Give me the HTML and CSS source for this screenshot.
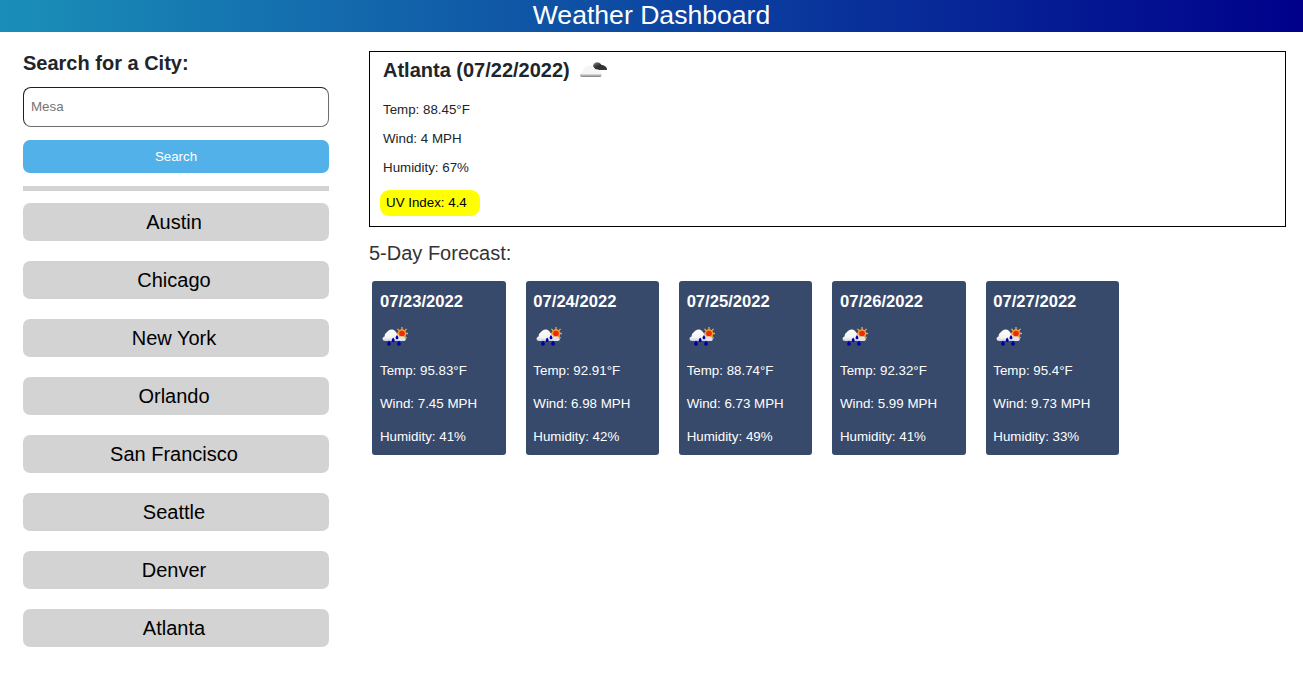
FILE: index.html
```html
<!DOCTYPE html>
<html lang="en">
<head>
    <meta charset="UTF-8">
    <meta name="viewport" content="width=device-width, initial-scale=1.0">
    <title>Weather Dashboard</title>
    <link rel="stylesheet" href="styles.css">
</head>
<body>
    <svg class="defs" width="0" height="0" aria-hidden="true">
        <defs>
            <linearGradient id="cloud-light" x1="0" y1="0" x2="0" y2="1">
                <stop offset="0" stop-color="#f4f4f4"/>
                <stop offset="0.7" stop-color="#f6f6f6"/>
                <stop offset="0.85" stop-color="#b5b5b5"/>
                <stop offset="1" stop-color="#808080"/>
            </linearGradient>
            <linearGradient id="cloud-dark" x1="0" y1="0" x2="1" y2="1">
                <stop offset="0" stop-color="#8a8a8a"/>
                <stop offset="0.45" stop-color="#2e2e2e"/>
                <stop offset="1" stop-color="#3c3c3c"/>
            </linearGradient>
            <linearGradient id="cloud-white" x1="0" y1="0" x2="0" y2="1">
                <stop offset="0" stop-color="#ffffff"/>
                <stop offset="0.7" stop-color="#f4f4f4"/>
                <stop offset="1" stop-color="#c9ced8"/>
            </linearGradient>
            <symbol id="icon-clouds" viewBox="0 0 30 18">
                <path d="M14 6c.4-2.400 2.600-4 5-3.600 1.800.2 3 1.300 3.600 2.600 2.400.2 4.400 1.400 5.400 3.400.4.900-.2 1.600-1.200 1.600H19c-2.500 0-4.600-1.600-5-4z" fill="url(#cloud-dark)"/>
                <path d="M1 15c0-1.700 1-3 2.800-3.400C4.200 8.400 7 5.800 10.500 5.800c2.800 0 5 1.500 6 3.600 2.800-.3 5.500 1.400 6 4 .3 1.700-.2 3.600-1.500 3.600H3c-1.300 0-2-1-2-2z" fill="url(#cloud-light)"/>
            </symbol>
            <symbol id="icon-rain-sun" viewBox="0 0 26 19">
                <path d="M20 0v13M13.500 6.500h13M15.400 1.900l9.200 9.200M24.600 1.900l-9.200 9.200" stroke="#f5a941" stroke-width="1.300"/>
                <circle cx="20" cy="6.500" r="4.300" fill="#f59a2c"/>
                <circle cx="20" cy="6.500" r="2.800" fill="#ee2a0c"/>
                <path d="M16 10c2.500-.6 6-.6 7 .4 1 .8 1 1.800.6 2.600-.3.600-.9 1-1.600 1H15z" fill="#dfe3ea"/>
                <path d="M3 14C1.300 14 .3 12.800 .6 11.300c.2-1 1-1.700 2-1.900 0-1.600.7-3 1.900-3.800C5.800 3.200 8.700 1.700 11.200 2.700c1.900.7 3.200 2.300 3.500 4.300 1.500.3 2.400 1.500 2.400 3.200 0 2.300-1.300 3.800-3 3.800z" fill="url(#cloud-white)"/>
                <path d="M7 13.400c1 1.500 1.900 2.400 1.900 3.400a1.900 1.900 0 0 1-3.800 0c0-1 .9-1.900 1.900-3.400zM11.200 10.600c.8 1.200 1.500 2 1.500 2.800a1.500 1.500 0 0 1-3 0c0-.8.700-1.600 1.500-2.800zM15 7.900c.8 1.200 1.500 2 1.500 2.800a1.500 1.500 0 0 1-3 0c0-.8.700-1.600 1.500-2.800zM17 13.400c1 1.500 1.900 2.400 1.900 3.400a1.900 1.900 0 0 1-3.800 0c0-1 .9-1.900 1.900-3.400z" fill="#0000a8"/>
            </symbol>
        </defs>
    </svg>

    <header class="top-bar">
        <h1>Weather Dashboard</h1>
    </header>

    <main class="layout">
        <aside class="sidebar">
            <h2>Search for a City:</h2>
            <input class="city-input" type="text" placeholder="Mesa">
            <button class="search-btn" type="button">Search</button>
            <div class="divider"></div>
            <button class="city-btn" type="button">Austin</button>
            <button class="city-btn" type="button">Chicago</button>
            <button class="city-btn" type="button">New York</button>
            <button class="city-btn" type="button">Orlando</button>
            <button class="city-btn" type="button">San Francisco</button>
            <button class="city-btn" type="button">Seattle</button>
            <button class="city-btn" type="button">Denver</button>
            <button class="city-btn" type="button">Atlanta</button>
        </aside>

        <section class="content">
            <div class="current">
                <h2>Atlanta (07/22/2022) <svg class="current-icon"><use href="#icon-clouds"/></svg></h2>
                <p>Temp: 88.45°F</p>
                <p>Wind: 4 MPH</p>
                <p>Humidity: 67%</p>
                <span class="uv">UV Index: 4.4</span>
            </div>

            <h3>5-Day Forecast:</h3>

            <div class="forecast">
                <div class="card">
                    <h4>07/23/2022</h4>
                    <svg class="card-icon"><use href="#icon-rain-sun"/></svg>
                    <p>Temp: 95.83°F</p>
                    <p>Wind: 7.45 MPH</p>
                    <p>Humidity: 41%</p>
                </div>
                <div class="card">
                    <h4>07/24/2022</h4>
                    <svg class="card-icon"><use href="#icon-rain-sun"/></svg>
                    <p>Temp: 92.91°F</p>
                    <p>Wind: 6.98 MPH</p>
                    <p>Humidity: 42%</p>
                </div>
                <div class="card">
                    <h4>07/25/2022</h4>
                    <svg class="card-icon"><use href="#icon-rain-sun"/></svg>
                    <p>Temp: 88.74°F</p>
                    <p>Wind: 6.73 MPH</p>
                    <p>Humidity: 49%</p>
                </div>
                <div class="card">
                    <h4>07/26/2022</h4>
                    <svg class="card-icon"><use href="#icon-rain-sun"/></svg>
                    <p>Temp: 92.32°F</p>
                    <p>Wind: 5.99 MPH</p>
                    <p>Humidity: 41%</p>
                </div>
                <div class="card">
                    <h4>07/27/2022</h4>
                    <svg class="card-icon"><use href="#icon-rain-sun"/></svg>
                    <p>Temp: 95.4°F</p>
                    <p>Wind: 9.73 MPH</p>
                    <p>Humidity: 33%</p>
                </div>
            </div>
        </section>
    </main>
</body>
</html>
```

FILE: styles.css
```css
* {
    margin: 0;
    padding: 0;
    box-sizing: border-box;
    font-family: "Liberation Sans", Arial, sans-serif;
}

body {
    background-color: white;
    color: #212529;
}

.defs {
    display: block;
    height: 0;
}

.top-bar {
    height: 32px;
    background: linear-gradient(to right, #1a8fb8, #00008b);
    color: white;
    text-align: center;
}

.top-bar h1 {
    font-size: 26.600px;
    font-weight: 400;
    line-height: 31px;
}

.layout {
    display: flex;
    align-items: flex-start;
    padding: 19px 17px 0 23px;
    gap: 40px;
}

.sidebar {
    width: 306px;
    flex-shrink: 0;
    display: flex;
    flex-direction: column;
}

.sidebar h2 {
    font-size: 20px;
    line-height: 24px;
    margin-bottom: 12px;
}

.city-input {
    height: 40px;
    padding: 0 7px 2px;
    font-size: 13.330px;
    border: 1px solid #6d6d6d;
    border-top-color: #1f1f1f;
    border-left-color: #1f1f1f;
    border-radius: 8px;
    margin-bottom: 13px;
}

.city-input::placeholder {
    color: #757575;
}

.search-btn {
    height: 33px;
    background-color: #53b1ea;
    color: white;
    border: none;
    border-radius: 7px;
    font-size: 13.330px;
    margin-bottom: 13px;
}

.divider {
    height: 5px;
    background-color: #d3d3d3;
    margin-bottom: 12px;
}

.city-btn {
    height: 38px;
    background-color: #d3d3d3;
    color: black;
    border: none;
    border-radius: 7px;
    font-size: 20px;
    margin-bottom: 20px;
    padding-right: 4px;
}

.content {
    flex: 1;
    min-width: 0;
}

.current {
    height: 176px;
    border: 1px solid black;
    padding: 0 10px;
    font-size: 13.330px;
}

.current h2 {
    font-size: 20px;
    line-height: 24px;
    padding: 6px 3px 0;
    margin-bottom: 20px;
    white-space: nowrap;
}

.current-icon {
    width: 30px;
    height: 18px;
    vertical-align: -1px;
    margin-left: 4px;
}

.current p {
    line-height: 15px;
    padding-left: 3px;
    margin-bottom: 14px;
}

.uv {
    display: block;
    width: 100px;
    height: 26px;
    margin-top: 15px;
    background-color: yellow;
    color: black;
    border-radius: 9px;
    padding: 5px 6px;
    line-height: 15px;
}

.content h3 {
    font-size: 20px;
    font-weight: 400;
    line-height: 22px;
    color: #333;
    margin-top: 15px;
    margin-bottom: 17px;
}

.forecast {
    display: flex;
    gap: 20.150px;
    padding-left: 3.400px;
}

.card {
    width: 133.200px;
    height: 174px;
    background-color: #374a6b;
    border-radius: 3px;
    color: white;
    padding: 12px 7.600px 0;
    font-size: 13.330px;
}

.card h4 {
    font-size: 16.600px;
    line-height: 18px;
    margin-bottom: 16px;
}

.card-icon {
    display: block;
    width: 26px;
    height: 19px;
    margin-left: 2.400px;
    margin-bottom: 17px;
}

.card p {
    line-height: 15px;
    margin-bottom: 18px;
}
```
